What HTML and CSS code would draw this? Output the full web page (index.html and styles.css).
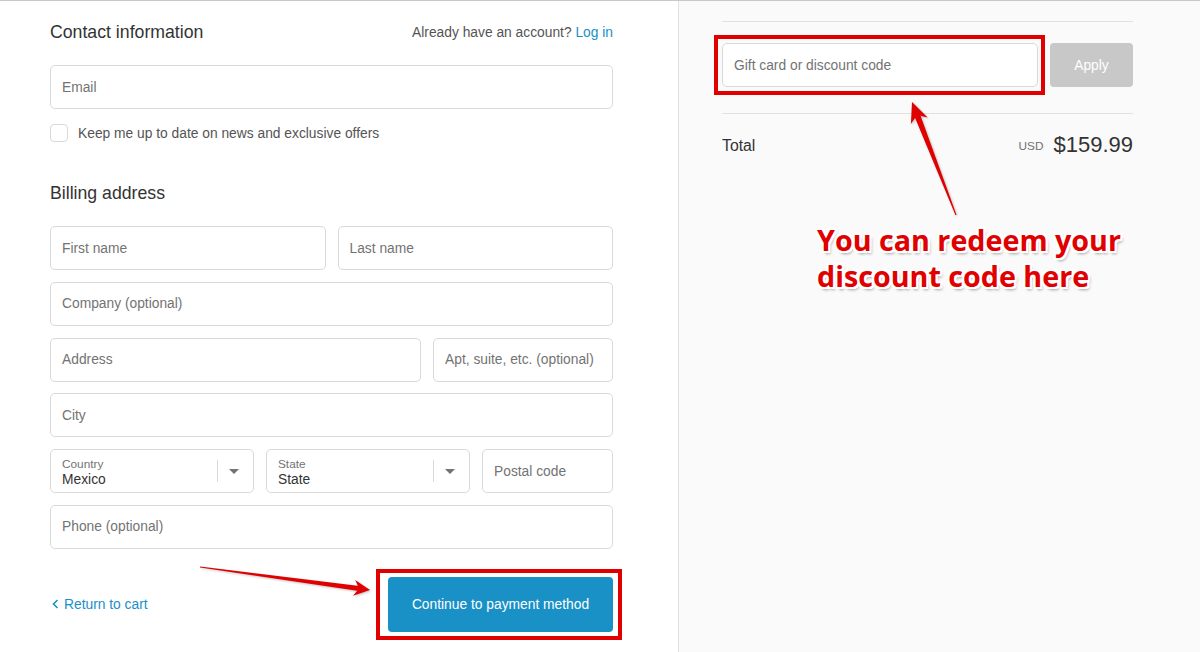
FILE: index.html
```html
<!DOCTYPE html>
<html lang="en">
<head>
    <meta charset="UTF-8">
    <meta name="viewport" content="width=device-width, initial-scale=1.0">
    <title>Checkout - Customer information</title>
    <link rel="stylesheet" href="styles.css">
</head>
<body>
    <div class="page">
        <main class="checkout">
            <div class="section-header">
                <h2>Contact information</h2>
                <p class="login">Already have an account? <a href="#">Log in</a></p>
            </div>
            <input class="field" type="email" placeholder="Email">
            <label class="checkbox">
                <span class="box"></span>
                Keep me up to date on news and exclusive offers
            </label>

            <h2 class="billing-title">Billing address</h2>
            <div class="fields">
                <div class="row row-half">
                    <input class="field" type="text" placeholder="First name">
                    <input class="field" type="text" placeholder="Last name">
                </div>
                <input class="field" type="text" placeholder="Company (optional)">
                <div class="row row-address">
                    <input class="field" type="text" placeholder="Address">
                    <input class="field" type="text" placeholder="Apt, suite, etc. (optional)">
                </div>
                <input class="field" type="text" placeholder="City">
                <div class="row row-region">
                    <div class="field select">
                        <div class="select-text">
                            <span class="select-label">Country</span>
                            <span class="select-value">Mexico</span>
                        </div>
                        <span class="select-sep"></span>
                        <span class="caret"></span>
                    </div>
                    <div class="field select">
                        <div class="select-text">
                            <span class="select-label">State</span>
                            <span class="select-value">State</span>
                        </div>
                        <span class="select-sep"></span>
                        <span class="caret"></span>
                    </div>
                    <input class="field" type="text" placeholder="Postal code">
                </div>
                <input class="field" type="tel" placeholder="Phone (optional)">
            </div>

            <div class="actions">
                <a href="#" class="back">
                    <svg width="7" height="10" viewBox="0 0 7 10"><path d="M5.5 1 L1.5 5 L5.5 9" fill="none" stroke="#1990c6" stroke-width="1.6"/></svg>
                    Return to cart
                </a>
                <div class="highlight highlight-button">
                    <button class="continue">Continue to payment method</button>
                </div>
            </div>
        </main>

        <aside class="summary">
            <div class="discount">
                <div class="highlight highlight-input">
                    <input class="field" type="text" placeholder="Gift card or discount code">
                </div>
                <button class="apply">Apply</button>
            </div>
            <div class="total">
                <span class="total-label">Total</span>
                <span class="total-price"><span class="currency">USD</span>$159.99</span>
            </div>
        </aside>

        <div class="annotations">
            <svg width="1200" height="652" viewBox="0 0 1200 652">
                <g fill="#e00000" class="arrow">
                    <!-- arrow pointing to the continue button -->
                    <polygon points="200,566.5 200,567.5 358.8,591 359.4,586"/>
                    <polygon points="370,590 353,595.8 359.1,588.5 355.2,580"/>
                    <!-- arrow pointing to the discount field -->
                    <polygon points="956.5,214.8 955.5,215.2 914.3,116.1 919.9,113.9"/>
                    <polygon points="912,102 927.6,117.4 917.1,115 910.9,123.9"/>
                </g>
            </svg>
            <p class="note">You can redeem your<br>discount code here</p>
        </div>
    </div>
</body>
</html>
```

FILE: styles.css
```css
body {
    margin: 0;
    font-family: "Liberation Sans", Arial, sans-serif;
    color: #333333;
    background: #ffffff;
}
.page {
    position: relative;
    display: flex;
    height: 652px;
    box-sizing: border-box;
    border-top: 1px solid #c8c8c8;
    overflow: hidden;
}
.checkout {
    width: 678px;
    box-sizing: border-box;
    padding: 19px 65px 0 50px;
}
h2 {
    margin: 0;
    font-size: 17.7px;
    font-weight: normal;
    line-height: 24px;
    color: #333333;
}
.section-header {
    display: flex;
    justify-content: space-between;
    align-items: center;
    margin-bottom: 21px;
}
.login {
    margin: 0;
    font-size: 13.8px;
    color: #545454;
}
a {
    color: #1990c6;
    text-decoration: none;
}
.field {
    display: block;
    width: 100%;
    height: 44px;
    box-sizing: border-box;
    margin: 0;
    padding: 0 11px;
    border: 1px solid #d9d9d9;
    border-radius: 5px;
    background: #ffffff;
    font-family: "Liberation Sans", Arial, sans-serif;
    font-size: 13.8px;
    color: #333333;
}
.field::placeholder {
    color: #737373;
}
.checkbox {
    display: flex;
    align-items: center;
    gap: 10px;
    margin-top: 15px;
    font-size: 13.8px;
    color: #545454;
}
.box {
    width: 18px;
    height: 18px;
    box-sizing: border-box;
    border: 1px solid #d9d9d9;
    border-radius: 4px;
    background: #ffffff;
}
.billing-title {
    margin-top: 39px;
    margin-bottom: 21px;
}
.fields {
    display: flex;
    flex-direction: column;
    gap: 11.8px;
}
.row {
    display: grid;
    gap: 12px;
}
.row-half {
    grid-template-columns: 1fr 1fr;
}
.row-address {
    grid-template-columns: 371px 1fr;
}
.row-region {
    grid-template-columns: 204px 204px 1fr;
}
.select {
    display: flex;
    align-items: center;
    padding-right: 14px;
}
.select-text {
    flex: 1;
    display: flex;
    flex-direction: column;
    line-height: 15px;
    padding-top: 1px;
}
.select-label {
    font-size: 11.8px;
    color: #737373;
}
.select-value {
    font-size: 13.8px;
    color: #333333;
}
.select-sep {
    width: 1px;
    height: 22px;
    background: #d9d9d9;
    margin-right: 11px;
}
.caret {
    width: 0;
    height: 0;
    border-left: 5px solid transparent;
    border-right: 5px solid transparent;
    border-top: 5px solid #737373;
}
.actions {
    display: flex;
    justify-content: space-between;
    align-items: center;
    margin-top: 28px;
}
.back {
    display: flex;
    align-items: center;
    gap: 5px;
    margin-left: 2px;
    font-size: 13.8px;
}
.highlight {
    border: 4px solid #e00000;
}
.highlight-button {
    padding: 4px 5px 4px 8px;
    margin: -8px -9px -8px 0;
}
.highlight-input {
    flex: 1;
    padding: 4px 3px 4px 4px;
    margin: -8px -7px -8px -8px;
}
.continue {
    display: block;
    width: 225px;
    height: 55px;
    border: none;
    border-radius: 4px;
    background: #1990c6;
    color: #ffffff;
    font-family: "Liberation Sans", Arial, sans-serif;
    font-size: 13.8px;
}
.summary {
    flex: 1;
    background: #fafafa;
    border-left: 1px solid #e1e1e1;
    padding: 20px 67px 0 43px;
}
.discount {
    display: flex;
    gap: 12px;
    padding: 21px 0 26px;
    border-top: 1px solid #e1e1e1;
    border-bottom: 1px solid #e1e1e1;
}
.apply {
    width: 83px;
    height: 44px;
    border: none;
    border-radius: 4px;
    background: #c8c8c8;
    color: #ffffff;
    font-family: "Liberation Sans", Arial, sans-serif;
    font-size: 13.8px;
}
.total {
    display: flex;
    justify-content: space-between;
    align-items: center;
    padding-top: 17px;
}
.total-label {
    font-size: 15.8px;
}
.total-price {
    font-size: 22px;
    line-height: 28px;
}
.currency {
    font-size: 11.8px;
    color: #717171;
    margin-right: 10px;
    vertical-align: 2px;
}
.annotations {
    position: absolute;
    inset: 0;
    pointer-events: none;
}
.annotations svg {
    position: absolute;
    left: 0;
    top: -1px;
}
.arrow {
    filter: drop-shadow(1px 1px 1px rgba(0, 0, 0, 0.25));
}
.note {
    position: absolute;
    left: 817px;
    top: 221px;
    margin: 0;
    font-family: "Open Sans", sans-serif;
    font-weight: bold;
    font-size: 28.7px;
    line-height: 36px;
    color: #e00000;
    text-shadow: 1px 0 0 #fff, -1px 0 0 #fff, 0 1px 0 #fff, 0 -1px 0 #fff,
                 2px 2px 0 #fff, -2px -2px 0 #fff, 2px -2px 0 #fff, -2px 2px 0 #fff,
                 2px 3px 3px rgba(0, 0, 0, 0.35);
}
```
